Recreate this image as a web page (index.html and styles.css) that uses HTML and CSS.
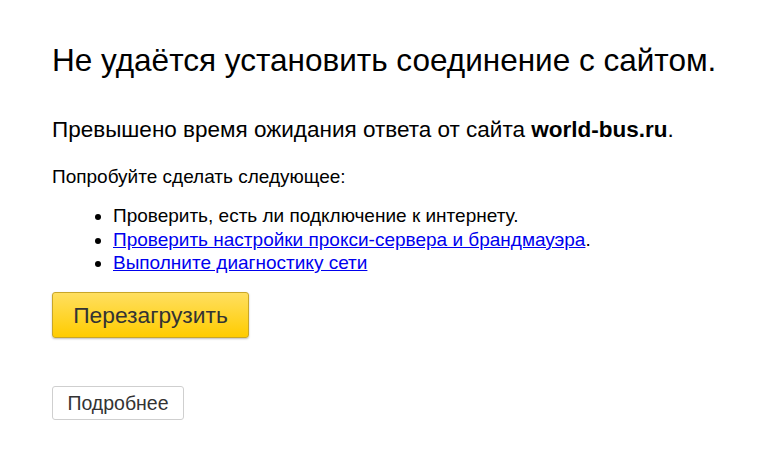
FILE: index.html
```html
<!DOCTYPE html>
<html>
<head>
    <title>Не удаётся установить соединение с сайтом</title>
    <link rel="stylesheet" href="styles.css">
</head>
<body>
    <div class="container">
        <h1 class="title">Не удаётся установить соединение с сайтом.</h1>
        <p class="reason">Превышено время ожидания ответа от сайта <b>world-bus.ru</b>.</p>
        <p class="hint">Попробуйте сделать следующее:</p>
        <ul class="steps">
            <li>Проверить, есть ли подключение к интернету.</li>
            <li><a href="#">Проверить настройки прокси-сервера и брандмауэра</a>.</li>
            <li><a href="#">Выполните диагностику сети</a></li>
        </ul>
        <button class="reload">Перезагрузить</button>
        <div class="more-row">
            <button class="more">Подробнее</button>
        </div>
    </div>
</body>
</html>
```

FILE: styles.css
```css
body {
    margin: 0;
    background: white;
    font-family: "Liberation Sans", Arial, sans-serif;
    color: #000;
}
.container {
    padding: 40px 52px;
}
.title {
    font-size: 31.5px;
    font-weight: normal;
    margin: 0 0 37px;
    line-height: 40px;
}
.reason {
    font-size: 22.5px;
    margin: 0 0 23px;
    line-height: 26px;
}
.hint {
    font-size: 19px;
    margin: 0 0 16px;
    line-height: 22px;
}
.steps {
    font-size: 19px;
    line-height: 23.5px;
    margin: 0 0 17.5px;
    padding-left: 61px;
}
.steps a {
    color: #0000ee;
}
.reload {
    display: block;
    font-family: inherit;
    font-size: 22.8px;
    color: #333;
    width: 197px;
    height: 46px;
    border: 1px solid #c9a628;
    border-radius: 3px;
    background: linear-gradient(#ffdf60, #ffcc00);
    box-shadow: 0 1px 2px rgba(0,0,0,0.25);
    cursor: pointer;
}
.more-row {
    margin-top: 48px;
}
.more {
    font-family: inherit;
    font-size: 19.5px;
    color: #333;
    width: 132px;
    height: 34px;
    border: 1px solid #cfcfcf;
    border-radius: 3px;
    background: white;
    cursor: pointer;
}
```
